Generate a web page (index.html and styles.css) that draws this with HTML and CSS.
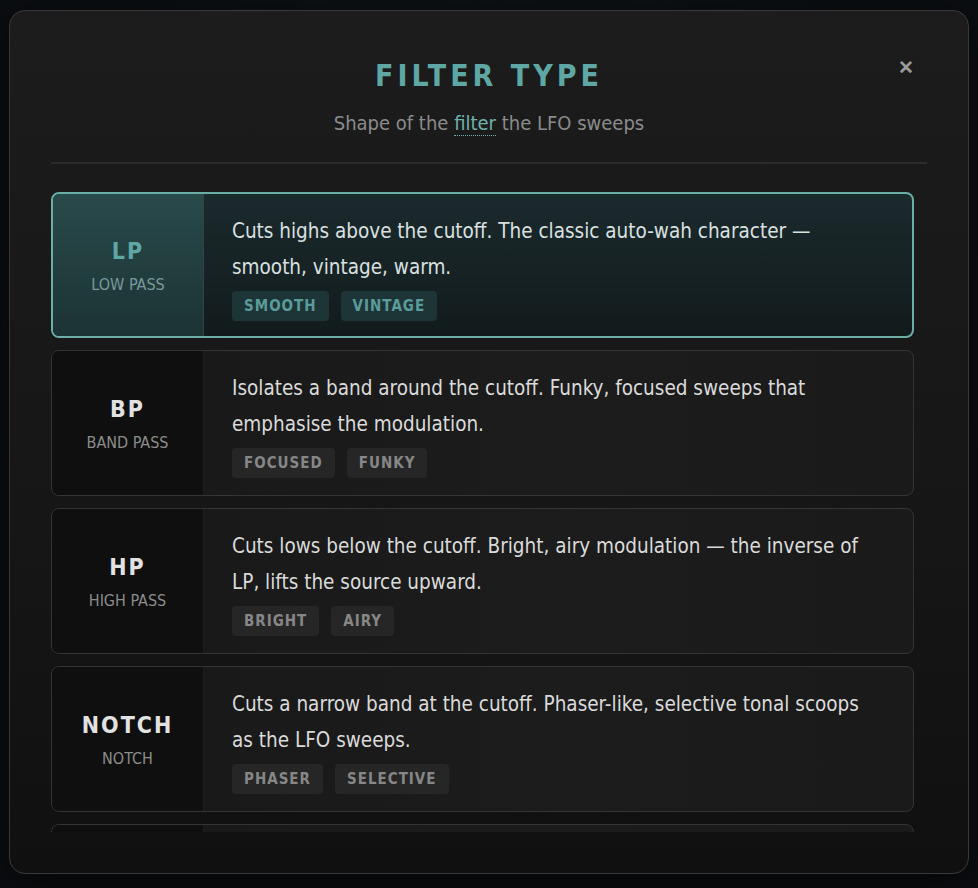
FILE: index.html
```html
<!DOCTYPE html>
<html lang="en">
<head>
    <meta charset="UTF-8">
    <meta name="viewport" content="width=device-width, initial-scale=1.0">
    <title>Filter Type</title>
    <link rel="stylesheet" href="styles.css">
</head>
<body>
    <div class="modal">
        <div class="modal-header">
            <h1 class="modal-title">FILTER TYPE</h1>
            <p class="modal-sub">Shape of the <span class="term">filter</span> the LFO sweeps</p>
            <button class="close" aria-label="Close">&#x2715;</button>
        </div>

        <div class="option-list">
            <div class="option active">
                <div class="option-label">
                    <div class="code">LP</div>
                    <div class="name">LOW PASS</div>
                </div>
                <div class="option-body">
                    <p class="desc">Cuts highs above the cutoff. The classic auto-wah character — smooth, vintage, warm.</p>
                    <div class="tags">
                        <span class="tag">SMOOTH</span>
                        <span class="tag">VINTAGE</span>
                    </div>
                </div>
            </div>
            <div class="option">
                <div class="option-label">
                    <div class="code">BP</div>
                    <div class="name">BAND PASS</div>
                </div>
                <div class="option-body">
                    <p class="desc">Isolates a band around the cutoff. Funky, focused sweeps that emphasise the modulation.</p>
                    <div class="tags">
                        <span class="tag">FOCUSED</span>
                        <span class="tag">FUNKY</span>
                    </div>
                </div>
            </div>
            <div class="option">
                <div class="option-label">
                    <div class="code">HP</div>
                    <div class="name">HIGH PASS</div>
                </div>
                <div class="option-body">
                    <p class="desc">Cuts lows below the cutoff. Bright, airy modulation — the inverse of LP, lifts the source upward.</p>
                    <div class="tags">
                        <span class="tag">BRIGHT</span>
                        <span class="tag">AIRY</span>
                    </div>
                </div>
            </div>
            <div class="option">
                <div class="option-label">
                    <div class="code">NOTCH</div>
                    <div class="name">NOTCH</div>
                </div>
                <div class="option-body">
                    <p class="desc">Cuts a narrow band at the cutoff. Phaser-like, selective tonal scoops as the LFO sweeps.</p>
                    <div class="tags">
                        <span class="tag">PHASER</span>
                        <span class="tag">SELECTIVE</span>
                    </div>
                </div>
            </div>
            <!-- next option, scrolled out of view -->
            <div class="option">
                <div class="option-label"></div>
                <div class="option-body"></div>
            </div>
        </div>
    </div>
</body>
</html>
```

FILE: styles.css
```css
body {
    margin: 0;
    height: 100vh;
    overflow: hidden;
    background: radial-gradient(circle at 50% 40%, #12181b 0%, #0b0e11 70%);
    font-family: "DejaVu Sans Condensed", "DejaVu Sans", sans-serif;
    font-stretch: condensed;
    display: flex;
    justify-content: center;
    align-items: flex-start;
}

.modal {
    width: 960px;
    height: 864px;
    margin-top: 10px;
    box-sizing: border-box;
    border: 1px solid #393939;
    border-radius: 16px;
    background: linear-gradient(180deg, #1c1c1c 0%, #161616 60%, #101010 100%);
    padding: 0 41px 41px 41px;
    display: flex;
    flex-direction: column;
    box-shadow: 0 10px 40px rgba(0, 0, 0, 0.6);
}

.modal-header {
    position: relative;
    text-align: center;
    padding-top: 45px;
    padding-bottom: 26px;
    border-bottom: 2px solid #2b2b2b;
}

.modal-title {
    margin: 0;
    font-size: 30px;
    font-weight: bold;
    letter-spacing: 4px;
    color: #5ea7a4;
    line-height: 40px;
}

.modal-sub {
    margin: 14px 0 0;
    font-size: 20px;
    color: #8b8b8b;
    line-height: 26px;
}

.modal-sub .term {
    color: #6fb1ad;
    border-bottom: 1px dotted #6fb1ad;
}

.close {
    position: absolute;
    top: 45px;
    right: 13px;
    background: none;
    border: none;
    color: #9a9a9a;
    font-size: 19px;
    font-weight: bold;
    cursor: pointer;
    padding: 0;
}

.option-list {
    flex: 1;
    overflow: hidden;
    padding: 28px 13px 0 0;
    display: flex;
    flex-direction: column;
    gap: 12px;
}

.option {
    flex-shrink: 0;
    display: flex;
    height: 146px;
    box-sizing: border-box;
    border: 1px solid #343434;
    border-radius: 8px;
    background: linear-gradient(90deg, #181818 0%, #1c1c1c 60%, #1a1a1a 100%);
    overflow: hidden;
}

.option-label {
    width: 151px;
    flex-shrink: 0;
    display: flex;
    flex-direction: column;
    align-items: center;
    justify-content: center;
    background: #0f0f0f;
    border-right: 1px solid #1e1e1e;
}

.code {
    font-size: 23px;
    font-weight: bold;
    letter-spacing: 2px;
    color: #e2e2e2;
    line-height: 32px;
}

.name {
    font-size: 16px;
    color: #8c8c8c;
    margin-top: 8px;
    line-height: 20px;
}

.option-body {
    padding: 19px 28px 0 28px;
}

.desc {
    margin: 0;
    font-size: 20.5px;
    line-height: 36px;
    color: #dadada;
}

.tags {
    display: flex;
    gap: 12px;
    margin-top: 6px;
}

.tag {
    background: #262626;
    color: #878787;
    font-size: 15px;
    font-weight: bold;
    letter-spacing: 1px;
    padding: 5px 12px;
    border-radius: 4px;
    line-height: 20px;
}

.option.active {
    border: 2px solid #6aaea7;
    background: linear-gradient(180deg, #1b2a2d 0%, #121b1c 100%);
}

.option.active .option-label {
    width: 150px;
    background: linear-gradient(180deg, #294a4b 0%, #1c3334 100%);
    border-right: 1px solid #2d4546;
}

.option.active .code {
    color: #5ea7a4;
}

.option.active .name {
    color: #79999a;
}

.option.active .desc {
    color: #d9e0e0;
}

.option.active .tag {
    background: #1e3537;
    color: #5a9c9a;
}
```
